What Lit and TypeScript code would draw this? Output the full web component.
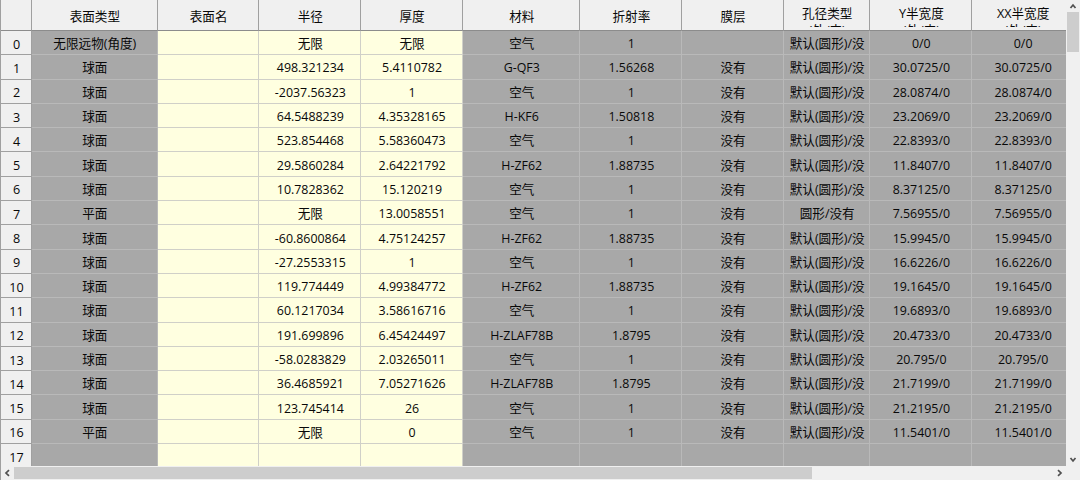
import { LitElement, html, css } from 'lit';
import { customElement } from 'lit/decorators.js';
import { classMap } from 'lit/directives/class-map.js';

const DEF = '默认(圆形)/没';
const HEADERS: string[][] = [
  ['表面类型'], ['表面名'], ['半径'], ['厚度'], ['材料'], ['折射率'], ['膜层'],
  ['孔径类型', '(外/内)'], ['Y半宽度', '(外/内)'], ['XX半宽度', '(外/内)'],
];

type Row = [string, string, string, string, string, string, string, string];
// type, radius, thickness, material, index, coating, aperture, half width
const ROWS: Row[] = [
  ['无限远物(角度)', '无限', '无限', '空气', '1', '', DEF, '0/0'],
  ['球面', '498.321234', '5.4110782', 'G-QF3', '1.56268', '没有', DEF, '30.0725/0'],
  ['球面', '-2037.56323', '1', '空气', '1', '没有', DEF, '28.0874/0'],
  ['球面', '64.5488239', '4.35328165', 'H-KF6', '1.50818', '没有', DEF, '23.2069/0'],
  ['球面', '523.854468', '5.58360473', '空气', '1', '没有', DEF, '22.8393/0'],
  ['球面', '29.5860284', '2.64221792', 'H-ZF62', '1.88735', '没有', DEF, '11.8407/0'],
  ['球面', '10.7828362', '15.120219', '空气', '1', '没有', DEF, '8.37125/0'],
  ['平面', '无限', '13.0058551', '空气', '1', '没有', '圆形/没有', '7.56955/0'],
  ['球面', '-60.8600864', '4.75124257', 'H-ZF62', '1.88735', '没有', DEF, '15.9945/0'],
  ['球面', '-27.2553315', '1', '空气', '1', '没有', DEF, '16.6226/0'],
  ['球面', '119.774449', '4.99384772', 'H-ZF62', '1.88735', '没有', DEF, '19.1645/0'],
  ['球面', '60.1217034', '3.58616716', '空气', '1', '没有', DEF, '19.6893/0'],
  ['球面', '191.699896', '6.45424497', 'H-ZLAF78B', '1.8795', '没有', DEF, '20.4733/0'],
  ['球面', '-58.0283829', '2.03265011', '空气', '1', '没有', DEF, '20.795/0'],
  ['球面', '36.4685921', '7.05271626', 'H-ZLAF78B', '1.8795', '没有', DEF, '21.7199/0'],
  ['球面', '123.745414', '26', '空气', '1', '没有', DEF, '21.2195/0'],
  ['平面', '无限', '0', '空气', '1', '没有', DEF, '11.5401/0'],
  ['', '', '', '', '', '', '', ''],
];

@customElement('app-root')
export class AppRoot extends LitElement {
  static styles = css`
    :host {
      display: grid;
      grid-template-columns: 1px 1065px 14px;
      grid-template-rows: 466px 14px;
      width: 1080px;
      height: 480px;
      overflow: hidden;
      background: #f0f0f0;
      color: #080808;
      font-family: 'Open Sans', 'Noto Sans CJK SC', sans-serif;
      font-size: 12.4px;
      line-height: 16px;
      cursor: default;
    }
    .edge { grid-row: 1 / 3; background: #a0a0a0; }
    .view { overflow: hidden; }
    .row {
      display: grid;
      grid-template-columns: 31px 125.7px 101.8px 101.7px 101.8px 117.5px 101.8px 101.7px 86.5px 101.8px 101.8px;
      height: 24.3px;
      width: max-content;
    }
    .row.head { height: 31px; }
    .row > div {
      box-sizing: border-box;
      display: flex;
      align-items: center;
      justify-content: center;
      overflow: hidden;
      white-space: nowrap;
      background: #a8a8a8;
      border-right: 1px solid #b9b9b9;
      border-bottom: 1px solid #b9b9b9;
      padding-top: 3px;
      padding-left: 1px;
    }
    .row > .cjk { font-size: 12.6px; }
    .row > .edit {
      background: #ffffe0;
      border-color: #d0d0c8;
    }
    .row > .num, .row.head > div {
      background: #f0f0f0;
      border-color: #a0a0a0;
    }
    .row > .num { font-size: 12.6px; padding-top: 4px; }
    .row.head > div {
      border-bottom-color: #8c8c8c;
      font-size: 12.6px;
      padding-top: 3px;
    }
    .row.head > .two {
      flex-direction: column;
      justify-content: flex-start;
      padding-top: 6px;
    }
    .two span { flex: none; height: 16px; }
    .two span + span { height: 5px; overflow: hidden; line-height: 18px; }
    .vbar { display: flex; flex-direction: column; align-items: center; }
    .vbar .thumb { width: 12px; height: 40px; background: #cdcdcd; }
    .vbar .gap { flex: 1; }
    .vbar svg { width: 12px; height: 12px; flex: none; }
    .hbar { grid-column: 2 / 4; display: flex; align-items: center; }
    .hbar .thumb { width: 798px; height: 12px; background: #cdcdcd; }
    .hbar .gap { flex: 1; }
    .hbar svg { width: 13px; height: 12px; flex: none; }
    .hbar .next { margin-right: 14px; }
    path { fill: none; stroke: #505050; stroke-width: 1.7; }
  `;

  private cell(text: string, col: number) {
    const cls = { edit: col >= 1 && col <= 3, cjk: /[\u4e00-\u9fff]/.test(text) };
    return html`<div class=${classMap(cls)}>${text}</div>`;
  }

  render() {
    return html`
      <div class="edge"></div>
      <div class="view">
        <div class="row head">
          <div></div>
          ${HEADERS.map((h) => html`<div class=${classMap({ two: h.length > 1 })}>${h.map((t) => html`<span>${t}</span>`)}</div>`)}
        </div>
        ${ROWS.map((r, i) => {
          const cells = [r[0], '', ...r.slice(1), r[7]];
          return html`<div class="row"><div class="num">${i}</div>${cells.map((c, k) => this.cell(c, k))}</div>`;
        })}
      </div>
      <div class="vbar">
        <svg viewBox="0 0 12 12"><path d="M3.5 8 L6 5 L8.5 8" /></svg>
        <div class="thumb"></div>
        <div class="gap"></div>
        <svg viewBox="0 0 12 12"><path d="M3.5 4 L6 7 L8.5 4" /></svg>
      </div>
      <div class="hbar">
        <svg viewBox="0 0 13 12"><path d="M8 3.2 L5 6 L8 8.8" /></svg>
        <div class="thumb"></div>
        <div class="gap"></div>
        <svg class="next" viewBox="0 0 13 12"><path d="M5 3.2 L8 6 L5 8.8" /></svg>
      </div>
    `;
  }
}
